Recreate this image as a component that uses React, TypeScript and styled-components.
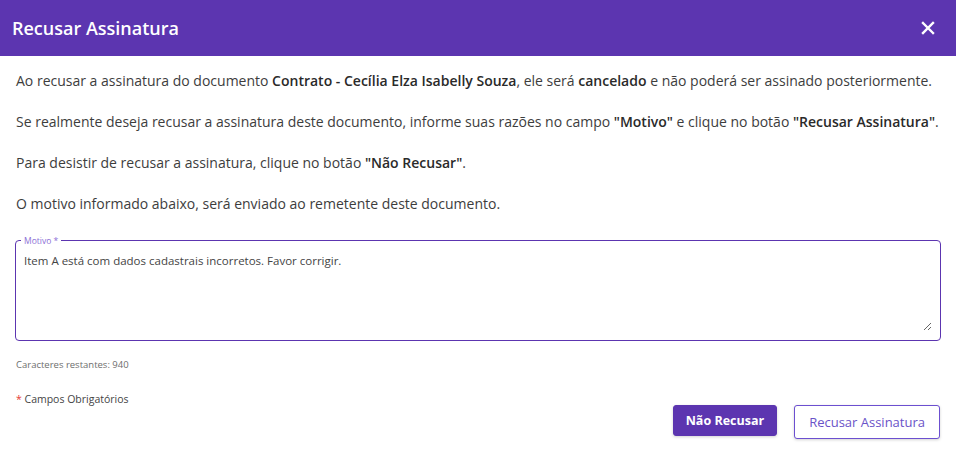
import React from "react";
import styled, { createGlobalStyle } from "styled-components";

const Global = createGlobalStyle`
  html, body { margin: 0; padding: 0; background: #fff; }
  body { font-family: "Open Sans", "Noto Sans", sans-serif; color: #333; }
  * { box-sizing: border-box; }
`;

const Dialog = styled.div`
  width: 956px;
  height: 459px;
  background: #fff;
  display: flex;
  flex-direction: column;
`;

const Header = styled.div`
  height: 56px;
  background: #5c35b0;
  display: flex;
  align-items: center;
  justify-content: space-between;
  padding: 0 20px 0 12px;
`;

const Title = styled.h2`
  margin: 0;
  font-size: 18px;
  font-weight: 600;
  color: #fff;
`;

const CloseButton = styled.button`
  border: 0;
  background: transparent;
  padding: 0;
  width: 16px;
  height: 16px;
  display: flex;
  align-items: center;
  justify-content: center;
  cursor: pointer;
`;

const Body = styled.div`
  padding: 15px 16px 0 16px;
  display: flex;
  flex-direction: column;
`;

const Paragraph = styled.p`
  margin: 0 0 22px 0;
  font-size: 14px;
  line-height: 19px;
  color: #3d3d3d;
  b { font-weight: 600; color: #2a2a2a; }
`;

const Field = styled.fieldset`
  margin: 1px 0 0 -1px;
  padding: 0 8px 0 8px;
  border: 1px solid #5c35b0;
  border-radius: 4px;
  height: 105px;
  display: flex;
  width: 926px;
`;

const Legend = styled.legend`
  font-size: 8.5px;
  color: #8c6fd6;
  padding: 0 3px;
  margin-left: -3px;
  line-height: 9px;
`;

const TextArea = styled.textarea`
  flex: 1;
  height: 86px;
  border: 0;
  outline: none;
  resize: vertical;
  font-family: inherit;
  font-size: 11.5px;
  color: #444;
  padding: 8px 0 0 0;
  margin: 0 0 6px 0;
  background: transparent;
`;

const Hint = styled.div`
  margin-top: 17px;
  font-size: 9.5px;
  color: #6e6e6e;
`;

const Footer = styled.div`
  display: flex;
  justify-content: space-between;
  align-items: flex-start;
  margin-top: 21px;
`;

const Required = styled.div`
  font-size: 10.5px;
  color: #444;
  span { color: #e53935; }
`;

const Buttons = styled.div`
  display: flex;
  gap: 17px;
  margin-top: 13px;
`;

const Button = styled.button<{ $primary?: boolean }>`
  font-family: inherit;
  font-size: ${(p) => (p.$primary ? "12.5px" : "13px")};
  height: ${(p) => (p.$primary ? "31px" : "34px")};
  padding: 0 ${(p) => (p.$primary ? "12px" : "14px")};
  border-radius: 3px;
  cursor: pointer;
  border: 1px solid ${(p) => (p.$primary ? "#5c35b0" : "#6c4fd0")};
  background: ${(p) => (p.$primary ? "#5c35b0" : "#fff")};
  color: ${(p) => (p.$primary ? "#fff" : "#6a52c8")};
  font-weight: ${(p) => (p.$primary ? 700 : 400)};
  box-shadow: 0 1px 3px rgba(0,0,0,0.18);
`;

export default function App() {
  return (
    <>
      <Global />
      <Dialog>
        <Header>
          <Title>Recusar Assinatura</Title>
          <CloseButton aria-label="Fechar">
            <svg width="14" height="14" viewBox="0 0 14 14">
              <path d="M2 2 L12 12 M12 2 L2 12" stroke="#fff" strokeWidth="2.4" strokeLinecap="square" />
            </svg>
          </CloseButton>
        </Header>
        <Body>
          <Paragraph>
            Ao recusar a assinatura do documento <b>Contrato - Cecília Elza Isabelly Souza</b>, ele será <b>cancelado</b> e não poderá ser assinado posteriormente.
          </Paragraph>
          <Paragraph>
            Se realmente deseja recusar a assinatura deste documento, informe suas razões no campo <b>"Motivo"</b> e clique no botão <b>"Recusar Assinatura"</b>.
          </Paragraph>
          <Paragraph>
            Para desistir de recusar a assinatura, clique no botão <b>"Não Recusar"</b>.
          </Paragraph>
          <Paragraph>
            O motivo informado abaixo, será enviado ao remetente deste documento.
          </Paragraph>
          <Field>
            <Legend>Motivo *</Legend>
            <TextArea defaultValue="Item A está com dados cadastrais incorretos. Favor corrigir." />
          </Field>
          <Hint>Caracteres restantes: 940</Hint>
          <Footer>
            <Required><span>*</span> Campos Obrigatórios</Required>
            <Buttons>
              <Button $primary>Não Recusar</Button>
              <Button>Recusar Assinatura</Button>
            </Buttons>
          </Footer>
        </Body>
      </Dialog>
    </>
  );
}
